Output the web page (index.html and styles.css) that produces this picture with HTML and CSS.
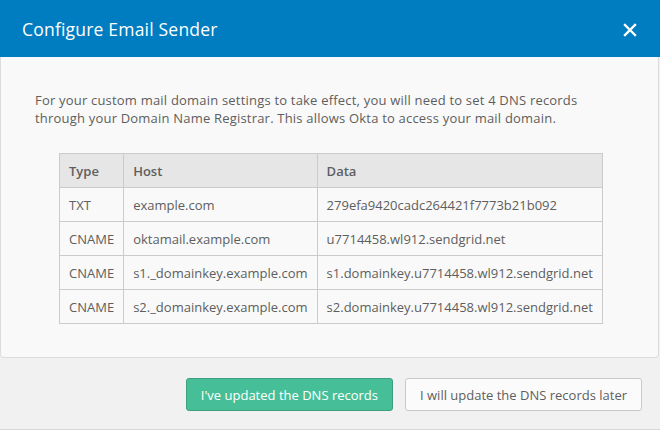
FILE: index.html
```html
<!DOCTYPE html>
<html>
<head>
<meta charset="utf-8">
<link rel="stylesheet" href="styles.css">
</head>
<body>
<div class="dialog">
  <header class="head">
    <h1 class="title">Configure Email Sender</h1>
    <button class="close" aria-label="Close">
      <svg width="14" height="14" viewBox="0 0 14 14"><path d="M2 2L12 12M12 2L2 12" stroke="#fff" stroke-width="2.4" stroke-linecap="square"/></svg>
    </button>
  </header>
  <section class="panel">
    <p class="intro">For your custom mail domain settings to take effect, you will need to set 4 DNS records through your Domain Name Registrar. This allows Okta to access your mail domain.</p>
    <table class="records">
      <thead>
        <tr><th class="c-type">Type</th><th class="c-host">Host</th><th>Data</th></tr>
      </thead>
      <tbody>
        <tr><td>TXT</td><td>example.com</td><td>279efa9420cadc264421f7773b21b092</td></tr>
        <tr><td>CNAME</td><td>oktamail.example.com</td><td>u7714458.wl912.sendgrid.net</td></tr>
        <tr><td>CNAME</td><td>s1._domainkey.example.com</td><td>s1.domainkey.u7714458.wl912.sendgrid.net</td></tr>
        <tr><td>CNAME</td><td>s2._domainkey.example.com</td><td>s2.domainkey.u7714458.wl912.sendgrid.net</td></tr>
      </tbody>
    </table>
  </section>
  <footer class="foot">
    <button class="btn btn-primary">I've updated the DNS records</button>
    <button class="btn btn-default">I will update the DNS records later</button>
  </footer>
</div>
</body>
</html>
```
FILE: styles.css
```css
html, body {
  margin: 0;
  padding: 0;
  background: #f1f1f1;
}
body {
  font-family: "Open Sans", "Liberation Sans", sans-serif;
  color: #5e5e5e;
  width: 660px;
  height: 430px;
  overflow: hidden;
}
.dialog {
  width: 660px;
  height: 429px;
  background: #f1f1f1;
  border-bottom: 1px solid #d8d8d8;
  display: flex;
  flex-direction: column;
}
.head {
  height: 57px;
  background: #007cc0;
  display: flex;
  align-items: center;
  justify-content: space-between;
  padding: 0 20px 0 22px;
  box-sizing: border-box;
  flex-shrink: 0;
}
.title {
  margin: 0;
  font-size: 17.5px;
  font-weight: 400;
  color: #fff;
  letter-spacing: 0.2px;
}
.close {
  background: none;
  border: 0;
  padding: 0;
  width: 20px;
  height: 20px;
  display: flex;
  align-items: center;
  justify-content: center;
  margin-top: 2px;
}
.panel {
  height: 301px;
  box-sizing: border-box;
  background: #f9f9f9;
  border: 1px solid #dcdcdc;
  border-top: 0;
  border-radius: 0 0 4px 4px;
  margin-right: 1px;
  padding: 34px 34px 0 34px;
  flex-shrink: 0;
}
.intro {
  margin: 0 0 26px;
  max-width: 548px;
  font-size: 13px;
  line-height: 18px;
  letter-spacing: 0.2px;
  color: #5e5e5e;
}
.records {
  border-collapse: collapse;
  margin-left: 24px;
  width: 543px;
  font-size: 13px;
  color: #5e5e5e;
}
.records th, .records td {
  border: 1px solid #cbcbcb;
  height: 33px;
  padding: 0 9px;
  text-align: left;
  white-space: nowrap;
}
.records th {
  background: #e6e6e6;
  font-weight: 600;
}
.records td {
  background: #f9f9f9;
}
.c-type { width: 46px; }
.c-host { width: 175px; }
.foot {
  display: flex;
  justify-content: flex-end;
  align-items: flex-start;
  gap: 12px;
  padding: 20px 18px 0 0;
}
.btn {
  font-family: inherit;
  font-size: 13px;
  height: 33px;
  padding: 0 14px;
  border-radius: 3px;
  cursor: pointer;
}
.btn-primary {
  background: #46bf98;
  border: 1px solid #3c9f7f;
  color: #fff;
}
.btn-default {
  background: #fbfbfb;
  border: 1px solid #c9c9c9;
  color: #5e5e5e;
}
```
